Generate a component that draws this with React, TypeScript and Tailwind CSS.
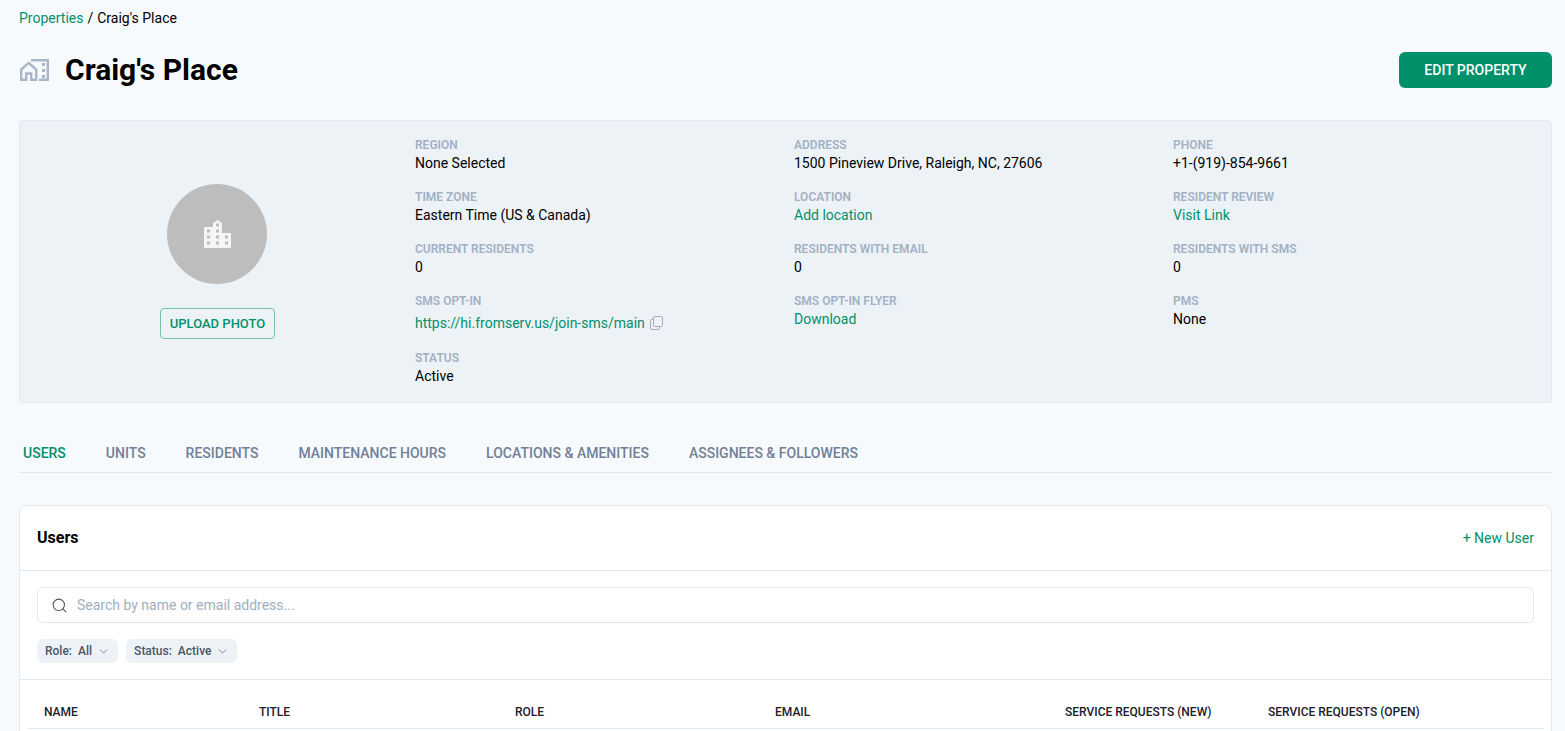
import { ChevronDown, Search } from "lucide-react";

const GREEN = "text-[#00906a]";

type Detail = { label: string; value: string; link?: boolean; copy?: boolean };

const columns: Detail[][] = [
  [
    { label: "REGION", value: "None Selected" },
    { label: "TIME ZONE", value: "Eastern Time (US & Canada)" },
    { label: "CURRENT RESIDENTS", value: "0" },
    { label: "SMS OPT-IN", value: "https://hi.fromserv.us/join-sms/main", link: true, copy: true },
    { label: "STATUS", value: "Active" },
  ],
  [
    { label: "ADDRESS", value: "1500 Pineview Drive, Raleigh, NC, 27606" },
    { label: "LOCATION", value: "Add location", link: true },
    { label: "RESIDENTS WITH EMAIL", value: "0" },
    { label: "SMS OPT-IN FLYER", value: "Download", link: true },
  ],
  [
    { label: "PHONE", value: "+1-(919)-854-9661" },
    { label: "RESIDENT REVIEW", value: "Visit Link", link: true },
    { label: "RESIDENTS WITH SMS", value: "0" },
    { label: "PMS", value: "None" },
  ],
];

const tabs = ["USERS", "UNITS", "RESIDENTS", "MAINTENANCE HOURS", "LOCATIONS & AMENITIES", "ASSIGNEES & FOLLOWERS"];

const headers = [
  { label: "NAME", width: "w-[215px]" },
  { label: "TITLE", width: "w-[256px]" },
  { label: "ROLE", width: "w-[260px]" },
  { label: "EMAIL", width: "w-[290px]" },
  { label: "SERVICE REQUESTS (NEW)", width: "w-[203px]" },
  { label: "SERVICE REQUESTS (OPEN)", width: "w-auto" },
];

function PropertyIcon() {
  return (
    <svg width="29" height="22" viewBox="0 0 29 22" fill="none" className="text-[#a9b6c8]">
      <path d="M1.2 22V10.5L8.7 3.8 16.2 10.5V22M1.2 20.8H6.2V14.5H11.2V20.8H16.2" stroke="currentColor" strokeWidth="2.4" />
      <path d="M11 1.2H27.8V20.8H19" stroke="currentColor" strokeWidth="2.4" />
      <path d="M22 4h3v3h-3zM22 10h3v3h-3zM22 16h3v3h-3z" fill="currentColor" />
    </svg>
  );
}

function BuildingIcon() {
  return (
    <svg width="27" height="28" viewBox="0 0 27 28" className="text-[#f5f5f5]">
      <path
        fill="currentColor"
        fillRule="evenodd"
        d="M0 28V7h9V3l4.5-3L18 3v10h9v15H0ZM12 3.5v3h3v-3h-3ZM3 9.5v3h3v-3H3Zm9 0v3h3v-3h-3ZM3 15.5v3h3v-3H3Zm9 0v3h3v-3h-3Zm9 0v3h3v-3h-3ZM3 21.5v3h3v-3H3Zm9 0v3h3v-3h-3Zm9 0v3h3v-3h-3Z"
      />
    </svg>
  );
}

function CopyIcon() {
  return (
    <svg width="13" height="14" viewBox="0 0 13 14" fill="none" stroke="#a8adb3" strokeWidth="1">
      <rect x="3.5" y="0.5" width="9" height="10" rx="1.5" />
      <path d="M3.5 3H2A1.5 1.5 0 0 0 .5 4.5V12A1.5 1.5 0 0 0 2 13.5h6A1.5 1.5 0 0 0 9.5 12v-1" />
    </svg>
  );
}

function DetailItem({ item }: { item: Detail }) {
  return (
    <div className={item.copy ? "h-[57px]" : "h-[52px]"}>
      <div className="text-xs leading-4 font-semibold text-[#a3b1c4]">{item.label}</div>
      <div className={`flex items-center gap-[5px] text-sm leading-5 ${item.copy ? "mt-[4px]" : "mt-0"} ${item.link ? GREEN : "text-black"}`}>
        <span>{item.value}</span>
        {item.copy && <CopyIcon />}
      </div>
    </div>
  );
}

function Filter({ label, value }: { label: string; value: string }) {
  return (
    <button className="flex h-6 items-center rounded-md bg-[#edf2f7] px-2 text-xs font-medium text-[#4a5568]">
      <span className="mr-[6px]">{label}:</span>
      <span>{value}</span>
      <ChevronDown size={13} strokeWidth={1.2} className="ml-[5px]" />
    </button>
  );
}

export default function App() {
  return (
    <div className="h-[731px] overflow-hidden bg-[#f7fafd] pr-[13px] pl-[19px] font-['Roboto',sans-serif]">
      {/* Breadcrumb */}
      <div className="flex h-9 items-center gap-1 text-sm text-black">
        <a className={GREEN}>Properties</a>
        <span>/</span>
        <span>Craig's Place</span>
      </div>

      {/* Title */}
      <div className="mt-4 flex h-9 items-center justify-between">
        <div className="ml-px flex items-center gap-[16px]">
          <PropertyIcon />
          <h1 className="pb-[2px] text-[30px] font-bold text-black">Craig's Place</h1>
        </div>
        <button className="h-9 w-[153px] rounded-md bg-[#00906a] text-sm font-medium text-white">EDIT PROPERTY</button>
      </div>

      {/* Property details */}
      <div className="mt-[32px] flex h-[283px] rounded border border-[#e2e8f0] bg-[#edf2f7]">
        <div className="flex w-[395px] shrink-0 flex-col items-center pt-[63px]">
          <div className="mr-px flex size-[100px] items-center justify-center rounded-full bg-[#bdbdbd]">
            <BuildingIcon />
          </div>
          <button className={`mt-6 h-[31px] w-[115px] rounded border border-[#74c4ab] text-[13px] font-medium ${GREEN}`}>UPLOAD PHOTO</button>
        </div>
        <div className="grid flex-1 grid-cols-[379px_379px_1fr] pt-4">
          {columns.map((column) => (
            <div key={column[0].label}>
              {column.map((item) => (
                <DetailItem key={item.label} item={item} />
              ))}
            </div>
          ))}
        </div>
      </div>

      {/* Tabs */}
      <div className="mt-[34px] flex h-[36px] gap-8 border-b border-[#e2e8f0]">
        {tabs.map((tab, i) => (
          <div key={tab} className="-mb-px flex h-[36px] items-center border-b border-[#e2e8f0] px-1 pb-1 text-sm font-medium">
            <span className={i === 0 ? GREEN : "text-[#718096]"}>{tab}</span>
          </div>
        ))}
      </div>

      {/* Users card */}
      <div className="mt-[32px] h-[300px] rounded-lg border border-[#e2e8f0] bg-white">
        <div className="flex h-[65px] items-center justify-between border-b border-[#e2e8f0] px-[17px]">
          <h2 className="text-base font-bold text-black">Users</h2>
          <a className={`text-sm ${GREEN}`}>+ New User</a>
        </div>
        <div className="border-b border-[#e2e8f0] px-[17px] pt-4 pb-4">
          <div className="flex h-9 items-center gap-[9px] rounded-md border border-[#e2e8f0] pl-[13px]">
            <Search size={17} strokeWidth={1.5} className="text-[#4a5568]" />
            <span className="text-sm text-[#a0aec0]">Search by name or email address...</span>
          </div>
          <div className="mt-4 flex gap-2">
            <Filter label="Role" value="All" />
            <Filter label="Status" value="Active" />
          </div>
        </div>
        <div className="px-2">
          <div className="flex h-[49px] items-end border-b border-[#e2e8f0] pb-[8px] pl-4 text-xs font-medium text-[#1a202c]">
            {headers.map((h) => (
              <div key={h.label} className={h.width}>
                {h.label}
              </div>
            ))}
          </div>
        </div>
      </div>
    </div>
  );
}
